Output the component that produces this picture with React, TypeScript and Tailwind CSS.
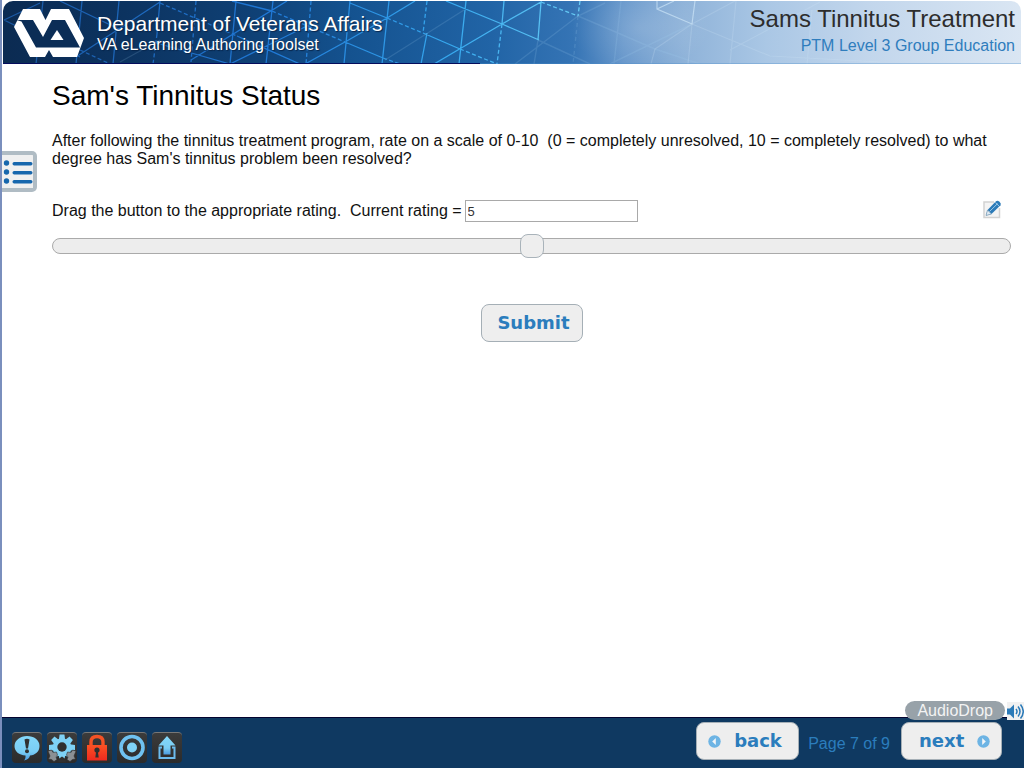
import { useState } from 'react';

function HeaderArt() {
  return (
    <svg
      className="absolute inset-0 h-full w-full"
      viewBox="3 1 1018 63"
      preserveAspectRatio="none"
      aria-hidden="true"
    >
      <defs>
        <linearGradient id="sky" x1="0" x2="1" y1="0" y2="0">
          <stop offset="0" stopColor="#0b2b52" />
          <stop offset="0.12" stopColor="#0c3360" />
          <stop offset="0.25" stopColor="#0f4176" />
          <stop offset="0.34" stopColor="#14528f" />
          <stop offset="0.48" stopColor="#2164a6" />
          <stop offset="0.56" stopColor="#3574b5" />
          <stop offset="0.61" stopColor="#6797cb" />
          <stop offset="0.67" stopColor="#8fb3d9" />
          <stop offset="0.75" stopColor="#aac7e5" />
          <stop offset="0.85" stopColor="#c2d6ec" />
          <stop offset="1" stopColor="#dae6f3" />
        </linearGradient>
        <linearGradient id="mesh" gradientUnits="userSpaceOnUse" x1="0" x2="600" y1="0" y2="0">
          <stop offset="0" stopColor="#1a56a0" />
          <stop offset="0.45" stopColor="#1f78d6" />
          <stop offset="0.75" stopColor="#36a8ee" />
          <stop offset="1" stopColor="#6fd0f4" />
        </linearGradient>
        <radialGradient id="glow">
          <stop offset="0" stopColor="#fff" stopOpacity="0.14" />
          <stop offset="1" stopColor="#fff" stopOpacity="0" />
        </radialGradient>
      </defs>
      <rect x="3" y="1" width="1018" height="63" fill="url(#sky)" />
      <ellipse cx="640" cy="28" rx="70" ry="42" fill="url(#glow)" />
      <g fill="none" stroke="url(#mesh)" strokeWidth="1.3">
        <path d="M4 20 40 3M4 20 80 57M43 1 36 64M82 1 76 64M60 1 121 30M119 1 113 64M76 57 160 2M160 1 157 34M236 1 230 64M191 60 287 1M153 42 230 64M237 36 300 64M232 1 272 11M230 64 311 24M273 1 266 64M305 64 345 42 387 18 415 1M345 42 383 58M350 1 344 64M350 3 387 18M389 1 382 64M423 33 460 49M427 33 421 64M466 1 459 64M446 1 502 24 539 40M434 64 502 24 541 2 538 40M504 1 502 24" />
        <path strokeDasharray="4 2.5" d="M80 50 110 64M157 34 153 64M160 3 237 36M196 1 191 62M272 11 345 42M311 1 306 64M383 58 400 64M387 18 423 33M427 1 423 33M460 49 497 64M502 24 497 64M541 2 578 16M580 1 578 16" />
      </g>
      <g fill="none" stroke="#a9d4f5" strokeOpacity="0.16" strokeWidth="1.4">
        <path d="M120 62 160 40M385 60 464 10M515 64 578 16 605 3M538 40 534 64M578 16 618 33 655 49 700 64M621 1 614 64M610 64 692 24M538 40 590 64" />
        <path strokeDasharray="4 3" d="M578 16 573 64" />
      </g>
      <g fill="none" stroke="#d6ecfb" strokeWidth="1.2">
        <path strokeOpacity="0.6" d="M657 1V9L692 24 695 1M657 9 674 1" />
        <path strokeOpacity="0.2" d="M692 24 688 64M692 24 735 1M655 49 651 64M655 49 692 24M736 1 730 64M730 50 820 2M692 24 770 56 880 62M812 10 807 64" />
      </g>
      <path d="M3 63.5H1021" stroke="#4a8cc8" strokeOpacity="0.35" />
      <path d="M3 63.5H480" stroke="#040c5c" />
    </svg>
  );
}

function VaLogo() {
  return (
    <svg className="h-[50px] w-[72px] shrink-0" viewBox="13 8 72 50" role="img" aria-label="VA">
      <path
        d="M14 27 23 9H40L45.500 20 51 9H69L84 38 77 57H53L49 50 45 57H30Z"
        fill="#fff"
      />
      <path d="M16.500 20H33L43 37 52 20H65L80 47.500H36L21.500 21.500Z" fill="#0b2d56" />
      <path d="M57 30 63.500 40H50.500Z" fill="#fff" />
    </svg>
  );
}

function ListIcon() {
  return (
    <svg className="h-[30px] w-[31px]" viewBox="-1 0 31 30" fill="#1767ad" aria-hidden="true">
      {[6, 15, 24].map((y) => (
        <g key={y}>
          <circle cx="3.500" cy={y} r="2.700" />
          <rect x="9.500" y={y - 1} width="20" height="3.400" rx="1.700" />
        </g>
      ))}
    </svg>
  );
}

function EditIcon() {
  return (
    <svg className="h-[20px] w-[20px]" viewBox="0 0 20 20" aria-hidden="true">
      <path d="M12 3H2V18.500H17.500V9" fill="#f4f4f4" stroke="#d2d2d2" strokeWidth="1.500" />
      <path d="M4 16.500 5.500 11 14 2.300Q15.500 1 17.500 2.800T18.500 6.300L9.500 15Z" fill="#2b7ab8" />
      <path d="M4 16.500 5.500 11 9.500 15Z" fill="#dfe9f1" stroke="#7e9db5" strokeWidth=".7" />
      <path d="M7.500 12.500 15.500 4.700M13.300 3.500 17.200 7.200" stroke="#a8d0ec" strokeWidth=".9" />
    </svg>
  );
}

function BlueFill({ id }: { id: string }) {
  return (
    <defs>
      <linearGradient id={id} x1="0" x2="0" y1="0" y2="1">
        <stop offset="0" stopColor="#84d8fa" />
        <stop offset="0.65" stopColor="#7acdf4" />
        <stop offset="1" stopColor="#4a9be0" />
      </linearGradient>
    </defs>
  );
}

function AlertIcon() {
  return (
    <svg className="h-[30px] w-[30px]" viewBox="0 0 30 30" aria-hidden="true">
      <BlueFill id="alert" />
      <path
        d="M15 3C22 3 27.500 7 27.500 13S23 22 18 22.500C17.500 25 15.500 27 12 27.500C13.300 26.300 13.700 24.500 13.500 22.500C7 22 2.500 18.500 2.500 13S8 3 15 3Z"
        fill="url(#alert)"
      />
      <path d="M12.500 6.500Q15 4.800 17.500 6.500L16 15.500H14Z" fill="#303030" />
      <circle cx="15" cy="18.300" r="2" fill="#303030" />
    </svg>
  );
}

function GearIcon() {
  return (
    <svg className="h-[30px] w-[30px]" viewBox="0 0 30 30" aria-hidden="true">
      <g fill="#7ed2f6">
        <circle cx="15" cy="14.500" r="9.300" />
        {[0, 45, 90, 135, 180, 225, 270, 315].map((a) => (
          <path key={a} d="M11.800 7 12.600 1.500H17.400L18.200 7Z" transform={`rotate(${a} 15 14.500)`} />
        ))}
      </g>
      <g fill="#8b9094" stroke="#303030" strokeWidth=".6">
        <path d="M1 18 4.500 17 6 19.500 9.500 19 10.500 22 9 24 10 26.500 7 28.500 4.500 26.500 1.500 26 3 23Z" />
        <path d="M29 18 25.500 17 24 19.500 20.500 19 19.500 22 21 24 20 26.500 23 28.500 25.500 26.500 28.500 26 27 23Z" />
      </g>
      <circle cx="15" cy="14" r="4.700" fill="#303030" />
      <path d="M11.500 29V26L15 23.500 18.500 26V29Z" fill="#303030" />
    </svg>
  );
}

function LockIcon() {
  return (
    <svg className="h-[30px] w-[30px]" viewBox="0 0 30 30" aria-hidden="true">
      <defs>
        <linearGradient id="lock" x1="0" x2="0" y1="0" y2="1">
          <stop offset="0" stopColor="#fb5123" />
          <stop offset="1" stopColor="#ee2a1f" />
        </linearGradient>
      </defs>
      <path d="M9 14V9Q9 3.500 15 3.500T21 9V14" fill="none" stroke="#f45225" strokeWidth="3.400" />
      <rect x="5" y="12" width="20" height="15.500" fill="url(#lock)" />
      <circle cx="15" cy="17" r="2.600" fill="#303030" />
      <path d="M14.200 18H15.800L16.700 24.500H13.300Z" fill="#303030" />
    </svg>
  );
}

function TargetIcon() {
  return (
    <svg className="h-[30px] w-[30px]" viewBox="0 0 30 30" aria-hidden="true">
      <circle cx="15" cy="14.500" r="11" fill="none" stroke="#6fc2f1" strokeWidth="3.600" />
      <circle cx="15" cy="14.500" r="5" fill="#7ed2f6" />
    </svg>
  );
}

function ShareIcon() {
  return (
    <svg className="h-[30px] w-[30px]" viewBox="0 0 30 30" aria-hidden="true">
      <BlueFill id="share" />
      <path d="M15 3 23.500 12.500H18.500V21.500H11.500V12.500H6.500Z" fill="url(#share)" />
      <path d="M10 14.500H7.500V25H22.500V14.500H20" fill="none" stroke="#6cbcee" strokeWidth="2" />
    </svg>
  );
}

function RoundArrow({ left = false }: { left?: boolean }) {
  return (
    <svg className="h-[13px] w-[13px]" viewBox="0 0 13 13" aria-hidden="true">
      <circle cx="6.500" cy="6.500" r="6.200" fill="#6db4e4" />
      <path d={left ? 'M7.800 3 4.200 6.500 7.800 10Z' : 'M5.200 3 8.800 6.500 5.200 10Z'} fill="#f4f6f8" />
    </svg>
  );
}

function SpeakerIcon() {
  return (
    <svg className="h-[18px] w-[17px] bg-[#f1f1f1]" viewBox="0 0 17 18" aria-hidden="true">
      <path d="M0 6.500H3L7 2.500V16.500L3 12.500H0Z" fill="#2b7ab8" />
      <path
        d="M9 7Q11 9.500 9 12M11 4.500Q15 9.500 11 14.500M13.500 2.500Q19 9.500 13.500 16.500"
        fill="none"
        stroke="#2b7ab8"
        strokeWidth="1.500"
      />
    </svg>
  );
}

const tools = [
  { label: 'Comments', Icon: AlertIcon },
  { label: 'Settings', Icon: GearIcon },
  { label: 'Lock', Icon: LockIcon },
  { label: 'Target', Icon: TargetIcon },
  { label: 'Share', Icon: ShareIcon },
];

export default function App() {
  const [rating, setRating] = useState('5');

  return (
    <div className="relative flex min-h-screen flex-col overflow-hidden border-l-2 border-[#7a8fbd] bg-white font-['Liberation_Sans',Arial,sans-serif] text-base text-black">
      <header className="relative mt-px mr-[3px] ml-px flex h-[63px] shrink-0 items-start justify-between overflow-hidden rounded-t-[10px]">
        <HeaderArt />
        <div className="relative flex gap-3 pt-[7px] pl-[10px] text-white">
          <VaLogo />
          <div className="pt-[4px] [text-shadow:1px_1px_1px_#08254a]">
            <p className="text-[21px] leading-6">Department of Veterans Affairs</p>
            <p className="text-base leading-[18px]">VA eLearning Authoring Toolset</p>
          </div>
        </div>
        <div className="relative pt-[4px] pr-[6px] text-right">
          <p className="text-2xl leading-7 text-[#2d2d2d]">Sams Tinnitus Treatment</p>
          <p className="text-base leading-[26px] text-[#2f7dbd]">PTM Level 3 Group Education</p>
        </div>
      </header>

      <button
        type="button"
        aria-label="Table of contents"
        className="absolute top-[151px] left-0 flex h-[41px] w-[35px] items-center rounded-r-[5px] border-4 border-l-0 border-[#b0bcc4] bg-[#f0f0f0]"
      >
        <ListIcon />
      </button>

      <main className="flex-1 pt-4 pr-[13px] pl-[50px]">
        <h1 className="text-[28px] leading-8">Sam's Tinnitus Status</h1>
        <p className="mt-5 leading-[18px] text-[#111]">
          After following the tinnitus treatment program, rate on a scale of 0-10&nbsp; (0 = completely
          unresolved, 10 = completely resolved) to what degree has Sam's tinnitus problem been resolved?
        </p>
        <div className="mt-[31px] flex h-6 items-center text-[#111]">
          <label htmlFor="rating" className="pr-[3px]">
            Drag the button to the appropriate rating.&nbsp; Current rating =
          </label>
          <input
            id="rating"
            type="text"
            value={rating}
            onChange={(e) => setRating(e.target.value)}
            className="h-[22px] w-[173px] border border-[#a9a9a9] bg-white px-[2px] text-[13px] text-[#333]"
          />
          <button type="button" aria-label="Edit" className="mr-[9px] mb-1 ml-auto">
            <EditIcon />
          </button>
        </div>
        <input
          type="range"
          min="0"
          max="10"
          aria-label="Rating"
          value={Number(rating) || 0}
          onChange={(e) => setRating(e.target.value)}
          className="mt-[15px] block h-4 w-full appearance-none rounded-full border border-[#aaa] bg-[#ededed] [&::-webkit-slider-thumb]:h-6 [&::-webkit-slider-thumb]:w-6 [&::-webkit-slider-thumb]:appearance-none [&::-webkit-slider-thumb]:rounded-[8px] [&::-webkit-slider-thumb]:border [&::-webkit-slider-thumb]:border-[#a9b3ba] [&::-webkit-slider-thumb]:bg-[#eee]"
        />
        <div className="mt-[50px] flex justify-center">
          <button
            type="button"
            className="h-[38px] w-[102px] rounded-lg border border-[#a5afb6] bg-[#eee] pl-1 font-['DejaVu_Sans',Verdana,sans-serif] text-lg font-bold text-[#2b7dbd]"
          >
            Submit
          </button>
        </div>
      </main>

      <footer className="relative flex h-[51px] shrink-0 items-start justify-between border-t border-[#03032f] bg-[#0f3961] pr-[22px] pl-[10px]">
        <div className="flex gap-[5px] pt-[14px]">
          {tools.map(({ label, Icon }) => (
            <button
              key={label}
              type="button"
              aria-label={label}
              className="rounded-[4px] border-t border-[#777] bg-linear-to-b from-[#3b3b3b] to-[#2b2b2b]"
            >
              <Icon />
            </button>
          ))}
        </div>
        <nav aria-label="Pages" className="flex items-center pt-1 font-['DejaVu_Sans',Verdana,sans-serif]">
          <button
            type="button"
            className="flex h-[38px] w-[103px] items-center gap-[13px] rounded-lg border border-[#a5afb6] bg-[#eee] pl-[11px] text-lg font-bold text-[#2b7dbd]"
          >
            <RoundArrow left />
            back
          </button>
          <span className="pr-[11px] pl-[9px] pt-[6px] font-['Liberation_Sans',Arial,sans-serif] text-base text-[#2b7dbd]">
            Page 7 of 9
          </span>
          <button
            type="button"
            className="flex h-[38px] w-[101px] items-center justify-between rounded-lg border border-[#a5afb6] bg-[#eee] pr-[11px] pl-[17px] text-lg font-bold text-[#2b7dbd]"
          >
            next
            <RoundArrow />
          </button>
        </nav>
        <div className="absolute -top-[17px] right-0 flex items-center gap-[2px]">
          <span className="h-[19px] rounded-full bg-[#98a2a9] px-3 leading-[19px] text-[#f3f3f3]">
            AudioDrop
          </span>
          <button type="button" aria-label="Play audio">
            <SpeakerIcon />
          </button>
        </div>
      </footer>
    </div>
  );
}
